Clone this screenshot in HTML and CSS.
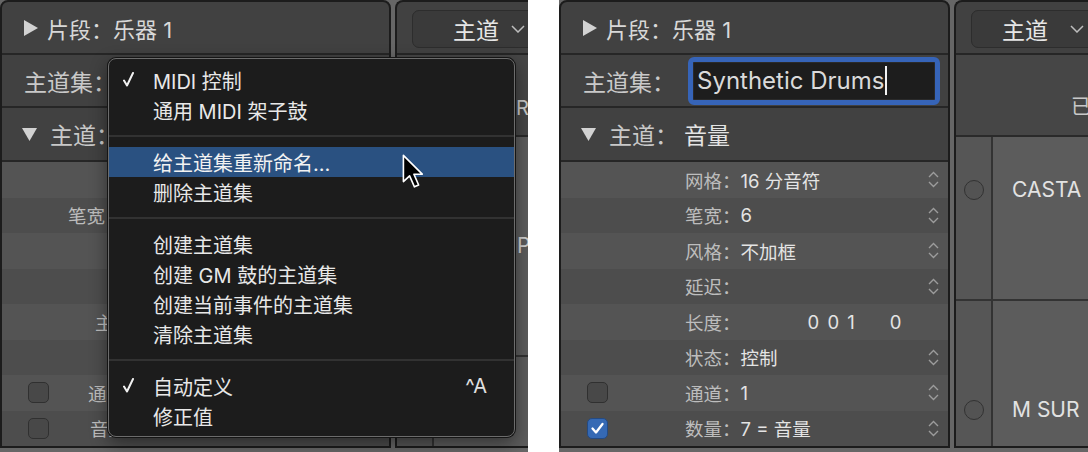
FILE: index.html
```html
<!DOCTYPE html>
<html lang="zh-CN">
<head>
  <meta charset="UTF-8" />
  <title>主道集 - 重新命名</title>
  <link rel="stylesheet" href="styles.css">
</head>
<body>
  <div class="page">

    <!-- Captura izquierda: menú del主道集 abierto -->
    <div class="shot shot-left">
      <div class="inspector">
        <div class="head">
          <svg class="tri-right" width="14" height="16" viewBox="0 0 14 16"><polygon points="0,0 14,8 0,16" /></svg>
          <span>片段：乐器 1</span>
        </div>
        <div class="set-row">
          <span class="set-label">主道集：</span>
        </div>
        <div class="lane">
          <svg class="tri-down" width="15" height="13" viewBox="0 0 15 13"><polygon points="0,0 15,0 7.5,13" /></svg>
          <span>主道：</span>
        </div>
        <div class="list">
          <div class="item"><span class="chk-slot"></span></div>
          <div class="item"><span class="chk-slot"></span><span class="lbl lbl-a">笔宽：</span></div>
          <div class="item"><span class="chk-slot"></span></div>
          <div class="item"><span class="chk-slot"></span></div>
          <div class="item"><span class="chk-slot"></span><span class="lbl lbl-b">主道：</span></div>
          <div class="item"><span class="chk-slot"></span></div>
          <div class="item"><span class="chk-slot box"></span><span class="lbl lbl-c">通道：</span></div>
          <div class="item"><span class="chk-slot box"></span><span class="lbl lbl-d">音量：</span></div>
        </div>
      </div>

      <div class="main">
        <div class="main-head">
          <div class="popup popup-left">
            <span>主道</span>
            <svg class="chev" width="14" height="8" viewBox="0 0 14 8"><polyline points="1,1 7,7 13,1" /></svg>
          </div>
        </div>
        <div class="main-info"><span class="info-left">Re</span></div>
        <div class="table">
          <div class="trow trow-tall">
            <div class="cell-dot"></div>
            <div class="cell-name name-left">Pr</div>
          </div>
          <div class="trow trow-rest">
            <div class="cell-dot"></div>
            <div class="cell-name"></div>
          </div>
        </div>
      </div>

      <!-- Menú emergente -->
      <div class="menu">
        <div class="menu-item">
          <svg class="tick" width="11" height="15" viewBox="0 0 11 15"><polyline points="1,8.5 4,13.5 10,1" /></svg>
          MIDI 控制
        </div>
        <div class="menu-item">通用 MIDI 架子鼓</div>
        <div class="menu-sep"></div>
        <div class="menu-item active">给主道集重新命名…</div>
        <div class="menu-item">删除主道集</div>
        <div class="menu-sep"></div>
        <div class="menu-item">创建主道集</div>
        <div class="menu-item">创建 GM 鼓的主道集</div>
        <div class="menu-item">创建当前事件的主道集</div>
        <div class="menu-item">清除主道集</div>
        <div class="menu-sep"></div>
        <div class="menu-item">
          <svg class="tick" width="11" height="15" viewBox="0 0 11 15"><polyline points="1,8.5 4,13.5 10,1" /></svg>
          自动定义
          <span class="shortcut">^A</span>
        </div>
        <div class="menu-item">修正值</div>
      </div>

      <!-- Puntero del ratón -->
      <svg class="cursor" width="23" height="35" viewBox="0 0 17 26">
        <path d="M1,1 L1,20.5 L5.6,16.2 L9.2,24.4 L12.3,23 L8.8,15 L15,15 Z" />
      </svg>
    </div>

    <!-- Captura derecha: campo de nombre en edición -->
    <div class="shot shot-right">
      <div class="inspector">
        <div class="head">
          <svg class="tri-right" width="14" height="16" viewBox="0 0 14 16"><polygon points="0,0 14,8 0,16" /></svg>
          <span>片段：乐器 1</span>
        </div>
        <div class="set-row">
          <span class="set-label">主道集：</span>
          <div class="name-field">
            <span>Synthetic Drums</span><span class="caret"></span>
          </div>
        </div>
        <div class="lane">
          <svg class="tri-down" width="15" height="13" viewBox="0 0 15 13"><polygon points="0,0 15,0 7.5,13" /></svg>
          <span>主道：</span><span class="lane-value">音量</span>
        </div>
        <div class="list">
          <div class="item">
            <span class="chk-slot"></span><span class="lbl">网格：</span><span class="val">16 分音符</span>
            <svg class="updown" width="11" height="17" viewBox="0 0 11 17"><polyline points="1,6 5.5,1.5 10,6" /><polyline points="1,11 5.5,15.5 10,11" /></svg>
          </div>
          <div class="item">
            <span class="chk-slot"></span><span class="lbl">笔宽：</span><span class="val">6</span>
            <svg class="updown" width="11" height="17" viewBox="0 0 11 17"><polyline points="1,6 5.5,1.5 10,6" /><polyline points="1,11 5.5,15.5 10,11" /></svg>
          </div>
          <div class="item">
            <span class="chk-slot"></span><span class="lbl">风格：</span><span class="val">不加框</span>
            <svg class="updown" width="11" height="17" viewBox="0 0 11 17"><polyline points="1,6 5.5,1.5 10,6" /><polyline points="1,11 5.5,15.5 10,11" /></svg>
          </div>
          <div class="item">
            <span class="chk-slot"></span><span class="lbl">延迟：</span><span class="val"></span>
            <svg class="updown" width="11" height="17" viewBox="0 0 11 17"><polyline points="1,6 5.5,1.5 10,6" /><polyline points="1,11 5.5,15.5 10,11" /></svg>
          </div>
          <div class="item">
            <span class="chk-slot"></span><span class="lbl">长度：</span>
            <span class="val len"><span class="len-bars">0 0 1</span><span class="len-ticks">0</span></span>
          </div>
          <div class="item">
            <span class="chk-slot"></span><span class="lbl">状态：</span><span class="val">控制</span>
            <svg class="updown" width="11" height="17" viewBox="0 0 11 17"><polyline points="1,6 5.5,1.5 10,6" /><polyline points="1,11 5.5,15.5 10,11" /></svg>
          </div>
          <div class="item">
            <span class="chk-slot box"></span><span class="lbl">通道：</span><span class="val">1</span>
            <svg class="updown" width="11" height="17" viewBox="0 0 11 17"><polyline points="1,6 5.5,1.5 10,6" /><polyline points="1,11 5.5,15.5 10,11" /></svg>
          </div>
          <div class="item">
            <span class="chk-slot box checked">
              <svg width="21" height="21" viewBox="0 0 21 21"><polyline points="5.5,10.5 9,14.5 15.5,6" /></svg>
            </span><span class="lbl">数量：</span><span class="val">7 = 音量</span>
            <svg class="updown" width="11" height="17" viewBox="0 0 11 17"><polyline points="1,6 5.5,1.5 10,6" /><polyline points="1,11 5.5,15.5 10,11" /></svg>
          </div>
        </div>
      </div>

      <div class="main">
        <div class="main-head">
          <div class="popup">
            <span>主道</span>
            <svg class="chev" width="14" height="8" viewBox="0 0 14 8"><polyline points="1,1 7,7 13,1" /></svg>
          </div>
        </div>
        <div class="main-info"><span class="info-right">已</span></div>
        <div class="table">
          <div class="trow trow-first">
            <div class="cell-dot"><span class="dot"></span></div>
            <div class="cell-name">CASTA</div>
          </div>
          <div class="trow trow-second">
            <div class="cell-dot"><span class="dot"></span></div>
            <div class="cell-name">M SUR</div>
          </div>
        </div>
      </div>
    </div>

  </div>
</body>
</html>
```

FILE: styles.css
```css
/* Colores base (tema oscuro del editor) */
:root {
  --gap-gray: #666666;
  --frame: #1c1c1c;
  --line: #262626;
  --panel: #414141;
  --row-light: #545454;
  --row-dark: #4d4d4d;
  --label: #bdbdbd;
  --text: #e4e4e4;
  --menu-bg: #1c1c1c;
  --menu-hi: #2a5181;
  --blue: #3664b8;
  --font-ui: Inter, "Noto Sans CJK SC", sans-serif;
}

html, body {
  margin: 0;
  background: #fff;
}
body {
  font-family: var(--font-ui);
}

.page {
  display: flex;
  gap: 31px;
  width: 1088px;
  height: 452px;
  overflow: hidden;
}

/* Cada captura */
.shot {
  position: relative;
  display: flex;
  height: 452px;
  background: var(--gap-gray);
  overflow: hidden;
}
.shot-left {
  width: 528px;
  flex-shrink: 0;
}
.shot-right {
  flex: 1;
}

/* Inspector (columna izquierda) */
.inspector {
  width: 391px;
  height: 448px;
  flex-shrink: 0;
  box-sizing: border-box;
  margin-right: 4px;
  border: 2px solid var(--frame);
  border-radius: 8px 8px 0 0;
  background: var(--panel);
  display: flex;
  flex-direction: column;
  overflow: hidden;
}

.head {
  height: 51px;
  flex-shrink: 0;
  border-bottom: 2px solid var(--line);
  display: flex;
  align-items: center;
  padding-left: 22px;
  font-size: 22px;
  color: #d8d8d8;
}
.tri-right {
  fill: #d2d2d2;
  margin-right: 9px;
}

.set-row {
  height: 51px;
  flex-shrink: 0;
  border-bottom: 2px solid var(--line);
  display: flex;
  align-items: center;
  padding-left: 22px;
  font-size: 23px;
  color: #c9c9c9;
}
.set-label {
  width: 92px;
  flex-shrink: 0;
}

/* Campo de texto con foco */
.name-field {
  margin-left: 13px;
  width: 252px;
  height: 48px;
  box-sizing: border-box;
  border: 5px solid var(--blue);
  border-radius: 6px;
  background: #1d1d1d;
  display: flex;
  align-items: center;
  padding-left: 4px;
  font-size: 24px;
  color: #dadada;
  white-space: nowrap;
  box-shadow: inset 0 0 0 1px #2a2a2a;
}
.caret {
  display: inline-block;
  width: 2px;
  height: 29px;
  background: #f2f2f2;
  margin-left: 1px;
}

.lane {
  height: 52px;
  flex-shrink: 0;
  border-bottom: 2px solid var(--line);
  display: flex;
  align-items: center;
  padding-left: 20px;
  font-size: 23px;
  color: #c9c9c9;
}
.tri-down {
  fill: #d2d2d2;
  margin-right: 13px;
}
.lane-value {
  margin-left: 6px;
  color: var(--text);
}

/* Lista de parámetros */
.list {
  flex: 1;
}
.item {
  height: 35.5px;
  display: flex;
  align-items: center;
  font-size: 18.5px;
  color: var(--text);
  background: var(--row-light);
}
.item:nth-child(even) {
  background: var(--row-dark);
}
.chk-slot {
  width: 21px;
  height: 21px;
  margin-left: 26px;
  flex-shrink: 0;
  box-sizing: border-box;
  border-radius: 5px;
}
.chk-slot.box {
  background: #484848;
  border: 1px solid #303030;
}
.chk-slot.checked {
  background: #3569b4;
  border-color: #244a82;
}
.chk-slot svg {
  display: block;
  margin: -1px;
  fill: none;
  stroke: #fff;
  stroke-width: 2.3;
  stroke-linecap: round;
  stroke-linejoin: round;
}
.lbl {
  margin-left: 77px;
  color: var(--label);
  white-space: nowrap;
}
.lbl-a { margin-left: 19px; }
.lbl-b { margin-left: 46px; }
.lbl-c { margin-left: 39px; }
.lbl-d { margin-left: 41px; }
.val {
  flex: 1;
  white-space: nowrap;
}
.len-bars {
  margin-left: 67px;
  word-spacing: 3px;
}
.len-ticks {
  margin-left: 35px;
}
.updown {
  margin-right: 9px;
  fill: none;
  stroke: #9c9c9c;
  stroke-width: 1.4;
}

/* Zona principal (derecha) */
.main {
  flex: 1;
  height: 448px;
  box-sizing: border-box;
  border: 2px solid var(--frame);
  border-right: 0;
  border-radius: 8px 0 0 0;
  background: var(--panel);
  display: flex;
  flex-direction: column;
  overflow: hidden;
}
.main-head {
  height: 51px;
  flex-shrink: 0;
  border-bottom: 2px solid var(--line);
  display: flex;
  align-items: center;
  padding-left: 15px;
}
.popup {
  width: 200px;
  height: 38px;
  flex-shrink: 0;
  margin-top: 3px;
  box-sizing: border-box;
  border: 1px solid #2d2d2d;
  border-radius: 7px;
  background: #3a3a3a;
  display: flex;
  align-items: center;
  padding-left: 30px;
  font-size: 23px;
  color: #e6e6e6;
}
.popup-left {
  padding-left: 40px;
}
.chev {
  margin-left: 22px;
  fill: none;
  stroke: #bdbdbd;
  stroke-width: 1.5;
}
.popup-left .chev {
  margin-left: 12px;
}

.main-info {
  height: 82px;
  flex-shrink: 0;
  border-bottom: 2px solid #2a2a2a;
  background: #464646;
  display: flex;
  align-items: flex-end;
  padding-bottom: 15px;
  box-sizing: border-box;
  font-size: 20px;
  color: #c8c8c8;
}
.info-right {
  margin-left: 115px;
}
.info-left {
  margin-left: 119px;
}

.table {
  flex: 1;
  display: flex;
  flex-direction: column;
  background: #5c5c5c;
}
.trow {
  display: flex;
  border-bottom: 2px solid #333;
}
.trow:last-child {
  border-bottom: 0;
  flex: 1;
}
.trow-first { height: 162px; }
.trow-tall { height: 218px; }
.cell-dot {
  width: 35px;
  flex-shrink: 0;
  border-right: 2px solid #333;
  background: #565656;
  display: flex;
  justify-content: center;
}
.dot {
  width: 20px;
  height: 20px;
  box-sizing: border-box;
  border-radius: 50%;
  border: 1.5px solid #323232;
  background: #535353;
}
.cell-name {
  padding-left: 19px;
  font-size: 21px;
  color: #e2e2e2;
  line-height: 24px;
}
.trow-first .dot { margin-top: 43px; }
.trow-first .cell-name { padding-top: 41px; }
.trow-second .dot { margin-top: 99px; }
.trow-second .cell-name { padding-top: 97px; }
.name-left {
  padding-left: 83px;
  padding-top: 97px;
  color: #cfcfcf;
}

/* Menú emergente */
.menu {
  position: absolute;
  left: 108px;
  top: 58px;
  width: 407px;
  height: 379px;
  box-sizing: border-box;
  padding: 6px 0;
  background: var(--menu-bg);
  border: 1px solid #6c6c6c;
  border-radius: 8px;
  box-shadow: 0 0 0 1px #151515, 0 6px 18px rgba(0, 0, 0, 0.45);
  overflow: hidden;
}
.menu-item {
  position: relative;
  height: 30px;
  display: flex;
  align-items: center;
  padding-left: 44px;
  font-size: 20px;
  color: #e8e8e8;
  white-space: nowrap;
}
.menu-item.active {
  background: var(--menu-hi);
  color: #f2f2f2;
}
.tick {
  position: absolute;
  left: 14px;
  top: 7px;
  fill: none;
  stroke: #f0f0f0;
  stroke-width: 2;
  stroke-linecap: round;
  stroke-linejoin: round;
}
.shortcut {
  position: absolute;
  right: 27px;
  color: #e0e0e0;
}
.menu-sep {
  height: 2px;
  margin: 10px 0;
  background: #323232;
}

/* Puntero */
.cursor {
  position: absolute;
  left: 402px;
  top: 154px;
  fill: #000;
  stroke: #fff;
  stroke-width: 1.2;
  stroke-linejoin: round;
}
```
